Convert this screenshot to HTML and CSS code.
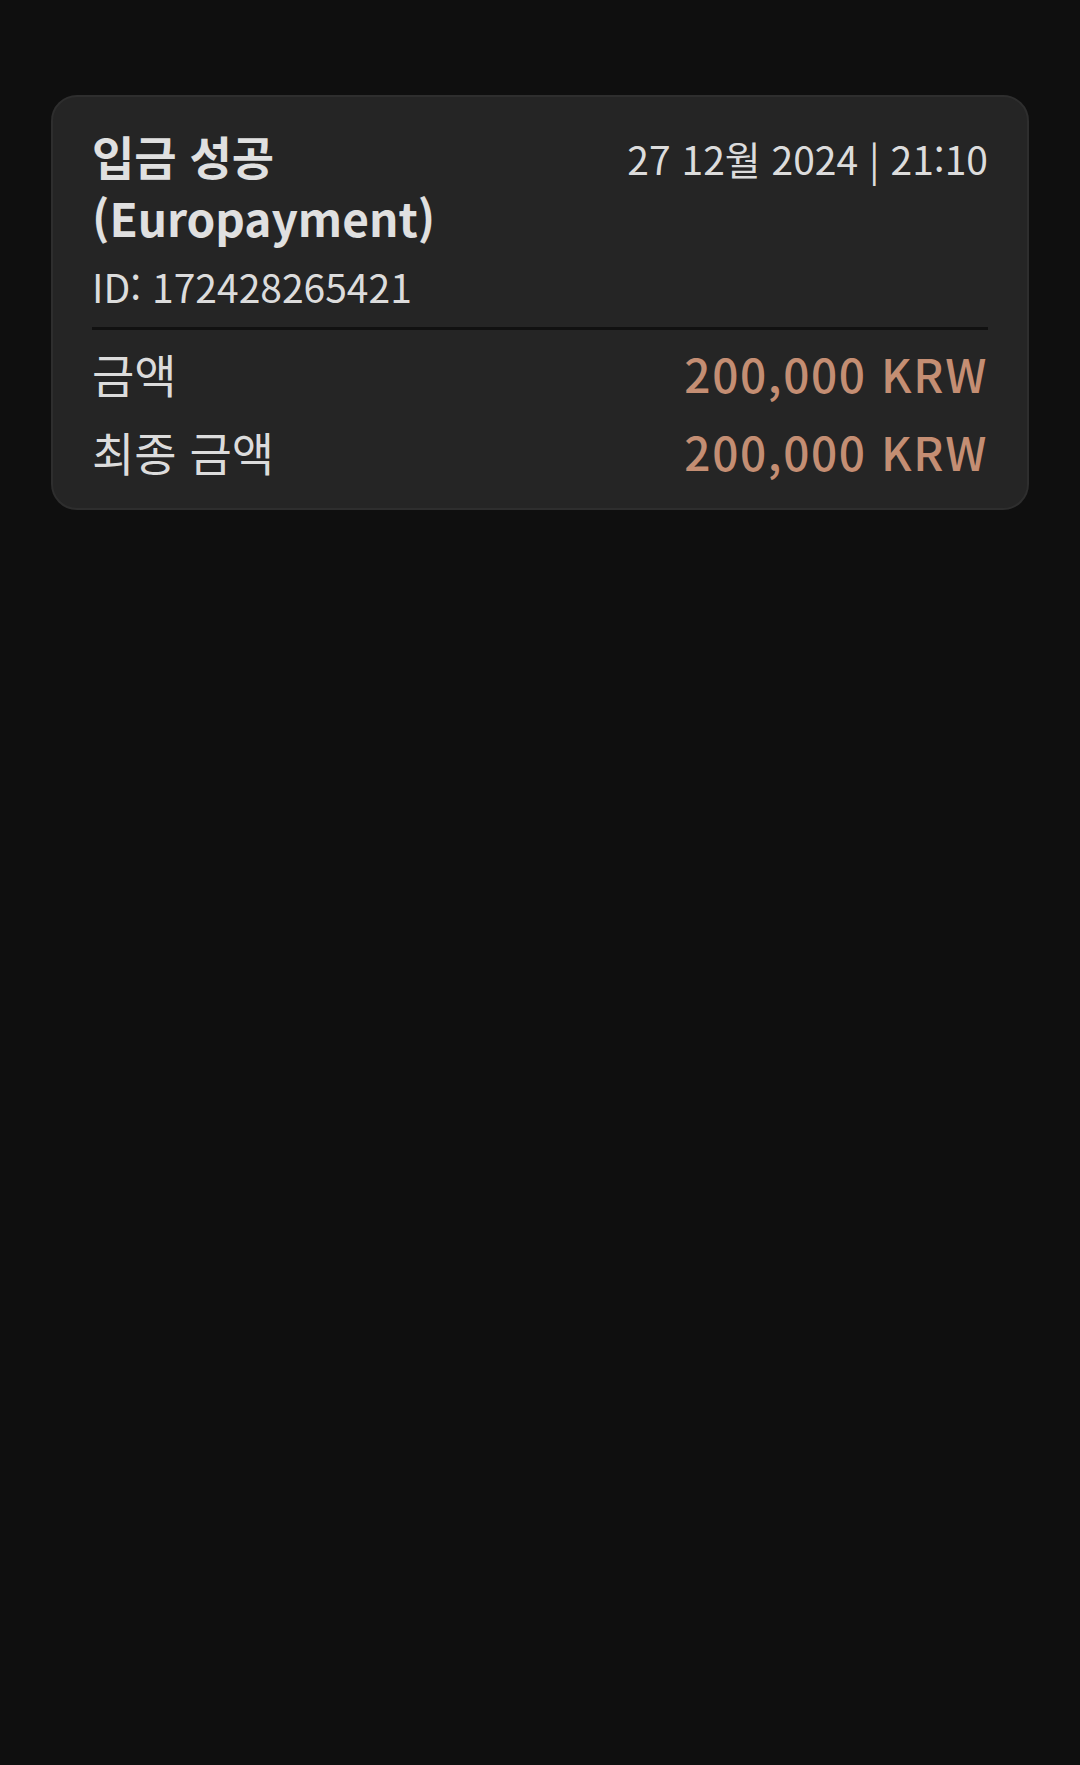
FILE: index.html
```html
<!DOCTYPE html>
<html lang="ko">
<head>
  <meta charset="UTF-8">
  <title>입금 내역</title>
  <link rel="stylesheet" href="styles.css">
</head>
<body>
  <div class="page">
    <!-- Transaction card -->
    <div class="tx-card">
      <div class="tx-head">
        <div class="tx-title">입금 성공 (Europayment)</div>
        <div class="tx-date">27 12월 2024 | 21:10</div>
      </div>
      <div class="tx-id">ID: 172428265421</div>
      <div class="tx-divider"></div>
      <div class="tx-row">
        <span class="tx-label">금액</span>
        <span class="tx-amount">200,000 KRW</span>
      </div>
      <div class="tx-row">
        <span class="tx-label">최종 금액</span>
        <span class="tx-amount">200,000 KRW</span>
      </div>
    </div>
  </div>
</body>
</html>
```

FILE: styles.css
```css
body {
  margin: 0;
  background: #0f0f0f;
  font-family: "Noto Sans CJK KR", "Noto Sans", sans-serif;
  color: #dedede;
  min-height: 100vh;
}
.page {
  padding: 95px 51px 0 51px;
}
.tx-card {
  background: #252525;
  border: 2px solid #2e2e2e;
  border-radius: 26px;
  padding: 27px 39px 18px 39px;
}
.tx-head {
  display: flex;
  align-items: baseline;
  justify-content: space-between;
  gap: 30px;
}
.tx-title {
  max-width: 420px;
  font-size: 46px;
  font-weight: 700;
  line-height: 62px;
  color: #e0e0e0;
}
.tx-date {
  font-size: 39px;
  line-height: 50px;
  white-space: nowrap;
  color: #dcdcdc;
}
.tx-id {
  font-size: 39px;
  line-height: 50px;
  margin-top: 13px;
  color: #dcdcdc;
}
.tx-divider {
  height: 3px;
  background: #111;
  margin: 16px 0 4px;
}
.tx-row {
  display: flex;
  justify-content: space-between;
  align-items: baseline;
  line-height: 78px;
}
.tx-label {
  font-size: 46px;
  color: #dcdcdc;
}
.tx-amount {
  font-size: 46px;
  font-weight: 500;
  letter-spacing: 1.6px;
  color: #c48e73;
}
```
